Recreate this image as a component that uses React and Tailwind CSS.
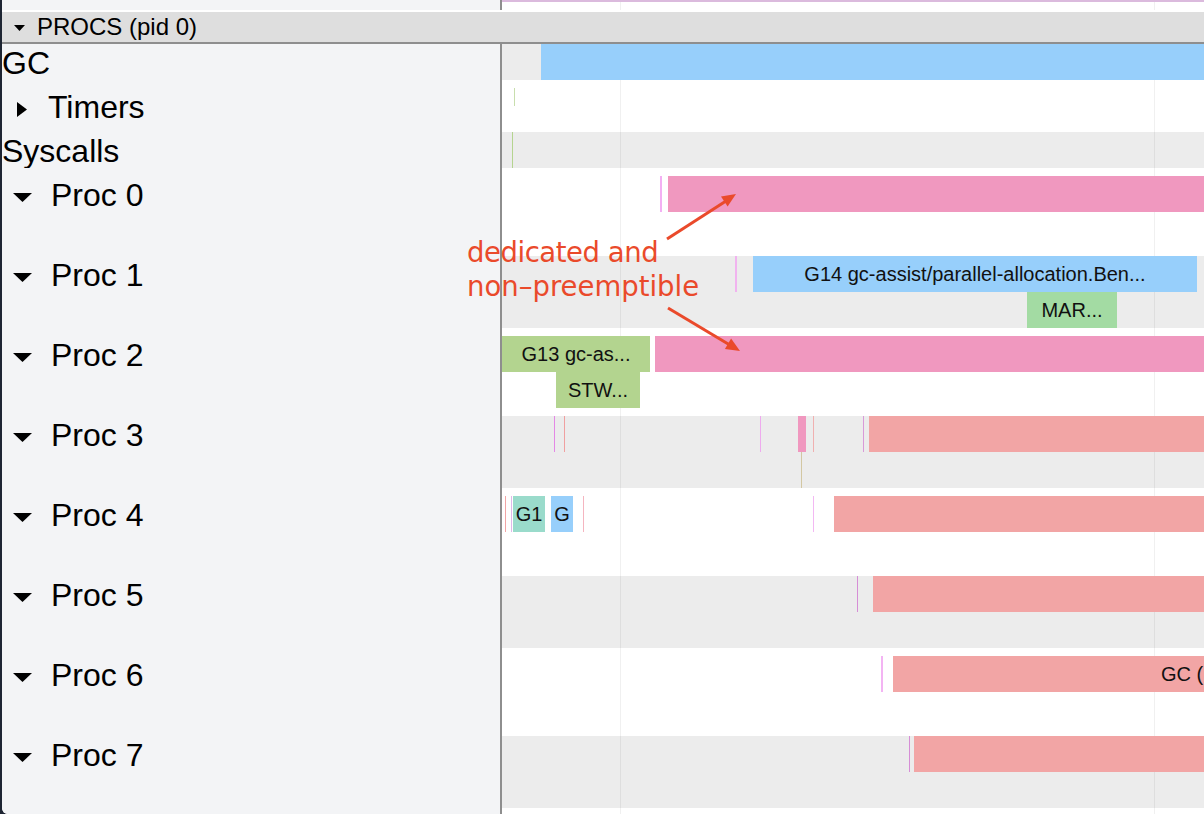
import React from "react";

const BLUE = "#97cffb";
const PINK = "#f098bf";
const GREEN = "#b3d48f";
const MINT = "#a3dba3";
const SALMON = "#f2a5a5";
const TEAL = "#9adbcb";
const TW = 702; // track width (x 502..1204)

const X = (x) => x - 502;

const rows = [
  {
    key: "gc",
    type: "plain",
    label: "GC",
    items: [{ l: X(541), w: TW - X(541), c: BLUE }],
  },
  {
    key: "timers",
    type: "timers",
    label: "Timers",
    items: [{ l: X(514), w: 1, t: 0, h: 18, c: "#c8dead" }],
  },
  {
    key: "sys",
    type: "plain",
    label: "Syscalls",
    items: [{ l: X(512), w: 1, c: "#b5d48f" }],
  },
  {
    key: "p0",
    type: "proc",
    label: "Proc 0",
    gray: false,
    items: [
      { l: X(660), w: 2, c: "#f3b0f3" },
      { l: X(668), w: TW - X(668), c: PINK },
    ],
  },
  {
    key: "p1",
    type: "proc",
    label: "Proc 1",
    gray: true,
    items: [
      { l: X(735), w: 2, c: "#f1b3ef" },
      { l: X(753), w: 444, c: BLUE, text: "G14 gc-assist/parallel-allocation.Ben..." },
      { l: X(1027), w: 90, t: 36, c: MINT, text: "MAR..." },
    ],
  },
  {
    key: "p2",
    type: "proc",
    label: "Proc 2",
    gray: false,
    items: [
      { l: 0, w: 148, c: GREEN, text: "G13 gc-as..." },
      { l: X(655), w: TW - X(655), c: PINK },
      { l: X(556), w: 84, t: 36, c: GREEN, text: "STW..." },
    ],
  },
  {
    key: "p3",
    type: "proc",
    label: "Proc 3",
    gray: true,
    items: [
      { l: X(554), w: 1, c: "#e488e6" },
      { l: X(564), w: 1, c: "#f0a0a0" },
      { l: X(760), w: 1, c: "#eeaaee" },
      { l: X(798), w: 8, c: PINK },
      { l: X(801), w: 1, t: 36, c: "#d3c7a2" },
      { l: X(813), w: 1, c: "#f0b0b0" },
      { l: X(863), w: 1, c: "#d99ad9" },
      { l: X(869), w: TW - X(869), c: SALMON },
    ],
  },
  {
    key: "p4",
    type: "proc",
    label: "Proc 4",
    gray: false,
    items: [
      { l: X(505), w: 1, c: "#f2a5a5" },
      { l: X(511), w: 1, c: "#e0b8ea" },
      { l: X(513), w: 32, c: TEAL, text: "G1" },
      { l: X(551), w: 22, c: BLUE, text: "G" },
      { l: X(583), w: 1, c: "#f5b5c0" },
      { l: X(813), w: 1, c: "#f3b8f3" },
      { l: X(834), w: TW - X(834), c: SALMON },
    ],
  },
  {
    key: "p5",
    type: "proc",
    label: "Proc 5",
    gray: true,
    items: [
      { l: X(857), w: 1, c: "#d68ed6" },
      { l: X(873), w: TW - X(873), c: SALMON },
    ],
  },
  {
    key: "p6",
    type: "proc",
    label: "Proc 6",
    gray: false,
    items: [
      { l: X(881), w: 2, c: "#f3b4f3" },
      { l: X(893), w: TW - X(893), c: SALMON, text: "GC (", textLeft: 268 },
    ],
  },
  {
    key: "p7",
    type: "proc",
    label: "Proc 7",
    gray: true,
    items: [
      { l: X(909), w: 1, c: "#d68ed6" },
      { l: X(914), w: TW - X(914), c: SALMON },
    ],
  },
];

function DownTri({ className }) {
  return (
    <svg className={className} viewBox="0 0 18 8" preserveAspectRatio="none">
      <polygon points="0,0 18,0 9,8" fill="#000" />
    </svg>
  );
}

function RightTri({ className }) {
  return (
    <svg className={className} viewBox="0 0 9 14" preserveAspectRatio="none">
      <polygon points="0,0 9,7 0,14" fill="#000" />
    </svg>
  );
}

function GridLines() {
  return (
    <>
      <div className="absolute top-0 bottom-0 left-[118px] w-[1px] bg-black/[0.06]" />
      <div className="absolute top-0 bottom-0 left-[652px] w-[1px] bg-black/[0.06]" />
    </>
  );
}

function Slice({ s }) {
  return (
    <div
      className="absolute flex items-center justify-center overflow-hidden whitespace-nowrap text-[20px] leading-none text-[#111]"
      style={{ left: s.l, width: s.w, top: s.t || 0, height: s.h || 36, background: s.c }}
    >
      {s.text && !s.textLeft && <span>{s.text}</span>}
      {s.text && s.textLeft && (
        <span className="absolute top-[8px]" style={{ left: s.textLeft }}>
          {s.text}
        </span>
      )}
    </div>
  );
}

function LeftLabel({ row }) {
  if (row.type === "plain") {
    return (
      <div className="flex h-[36px] items-center">
        <span className="mt-[1px] text-[32px] leading-none text-black">{row.label}</span>
      </div>
    );
  }
  if (row.type === "timers") {
    return (
      <div className="flex h-[52px] items-start pt-[8px]">
        <div className="flex h-[36px] items-center pl-[15px]">
          <RightTri className="mt-[6px] h-[15px] w-[10px]" />
          <span className="ml-[21px] mt-[1px] text-[32px] leading-none text-black">{row.label}</span>
        </div>
      </div>
    );
  }
  return (
    <div className="flex h-[80px] items-start pt-[8px]">
      <div className="flex h-[36px] items-center pl-[11px]">
        <DownTri className="mt-[7px] h-[9px] w-[19px]" />
        <span className="ml-[19px] mt-[1px] text-[32px] leading-none text-black">{row.label}</span>
      </div>
    </div>
  );
}

function Track({ row }) {
  let outer = "relative h-[36px] bg-[#ececec]";
  let inner = "relative h-[36px]";
  if (row.type === "timers") {
    outer = "relative h-[52px] bg-white pt-[8px]";
    inner = "relative h-[44px]";
  } else if (row.type === "proc") {
    outer = "relative h-[80px] bg-white pt-[8px]";
    inner = row.gray ? "relative h-[72px] bg-[#ececec]" : "relative h-[72px] bg-white";
  }
  return (
    <div className={outer}>
      <div className={inner}>
        <GridLines />
        {row.items.map((s, i) => (
          <Slice key={i} s={s} />
        ))}
      </div>
      {row.type !== "plain" && (
        <div className="absolute top-0 h-[8px] w-full">
          <GridLines />
        </div>
      )}
    </div>
  );
}

export default function App() {
  return (
    <div className="relative flex h-[814px] w-[1204px] overflow-hidden bg-[#1e2533] pl-[2px] font-['Liberation_Sans',Arial,sans-serif]">
      <div className="flex flex-1 flex-col overflow-hidden rounded-bl-[6px] bg-white">
        {/* top strip */}
        <div className="flex h-[10px]">
          <div className="w-[498px] bg-[#f3f4f6]" />
          <div className="w-[2px] bg-[#8e8e8e]" />
          <div className="relative flex-1 border-t-2 border-[#dbbadd] bg-white">
            <GridLines />
          </div>
        </div>
        <div className="h-[2px] bg-white" />
        {/* header */}
        <div className="flex h-[32px] items-center border-b-2 border-[#8e8e8e] bg-[#dedede] pl-[12px]">
          <DownTri className="mt-[1px] h-[6px] w-[11px]" />
          <span className="ml-[12px] text-[24px] leading-none text-black">PROCS (pid 0)</span>
        </div>
        {/* rows */}
        {rows.map((row) => (
          <div key={row.key} className="flex">
            <div className="w-[498px] bg-[#f3f4f6]">
              <LeftLabel row={row} />
            </div>
            <div className="w-[2px] bg-[#8e8e8e]" />
            <div className="flex-1">
              <Track row={row} />
            </div>
          </div>
        ))}
        <div className="flex flex-1">
          <div className="w-[498px] bg-[#f3f4f6]" />
          <div className="w-[2px] bg-[#8e8e8e]" />
          <div className="relative flex-1 bg-white">
            <GridLines />
          </div>
        </div>
      </div>

      {/* annotation */}
      <div className="pointer-events-none absolute left-[467px] top-[235px] font-['DejaVu_Sans',sans-serif] text-[27.5px] leading-[34px] text-[#ea4a2b]">
        <div className="tracking-[-0.45px]">dedicated and</div>
        <div>non–preemptible</div>
      </div>
      <svg
        className="pointer-events-none absolute left-0 top-0"
        width="1204"
        height="814"
        viewBox="0 0 1204 814"
      >
        <line x1="667" y1="239" x2="726" y2="201" stroke="#ea4a2b" strokeWidth="3" />
        <polygon points="736,194 727.6,206.6 721,196.6" fill="#ea4a2b" />
        <line x1="668" y1="308" x2="729" y2="344.5" stroke="#ea4a2b" strokeWidth="3" />
        <polygon points="740,351 724.9,348.9 731.1,338.6" fill="#ea4a2b" />
      </svg>
    </div>
  );
}
